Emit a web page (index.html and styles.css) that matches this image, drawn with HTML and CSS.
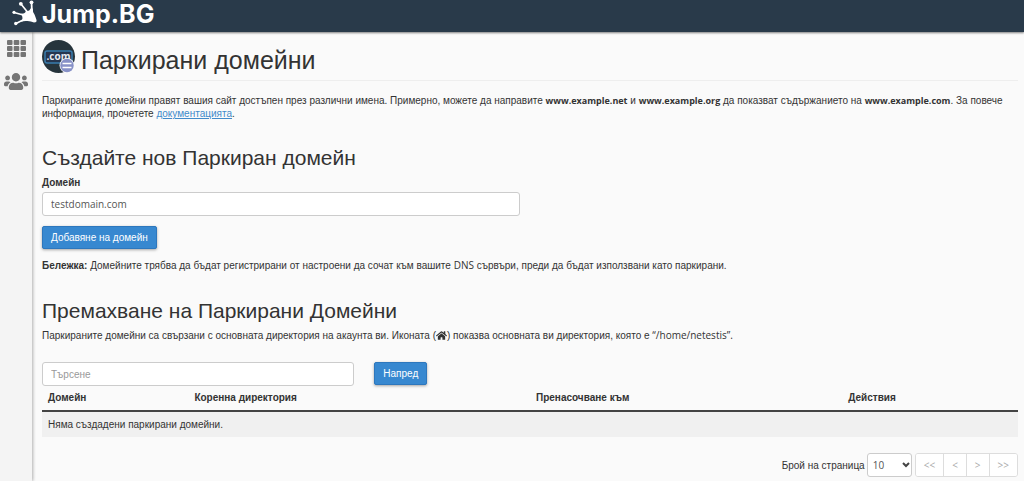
FILE: index.html
```html
<!DOCTYPE html>
<html lang="bg">
<head>
<meta charset="utf-8">
<meta name="viewport" content="width=device-width, initial-scale=1">
<title>Паркирани домейни</title>
<link rel="stylesheet" href="styles.css">
</head>
<body>
<header class="topbar">
  <a class="brand" href="#">
    <svg class="brand-mark" viewBox="0 0 25 26" aria-hidden="true">
      <g stroke="#fff" stroke-linecap="round" fill="none">
        <path d="M2 12.500L15 16" stroke-width="1.600"/>
        <path d="M9 4L17 14" stroke-width="1.600"/>
        <path d="M19.500 2L20 14" stroke-width="1.800"/>
        <path d="M4 23.500L15 18" stroke-width="1.600"/>
      </g>
      <g fill="#fff">
        <circle cx="2" cy="12.300" r="1.600"/>
        <circle cx="8.800" cy="3.800" r="1.900"/>
        <circle cx="19.500" cy="2.300" r="1.900"/>
        <circle cx="3.800" cy="23.500" r="1.700"/>
        <path d="M9 13.800Q13.500 14 14 10.500Q17.500 12 18.500 8.500L20.800 8.500Q20.500 12 22.500 14.500Q23.500 17 24.500 20Q25 22.500 22 22.500Q19 21 15.500 21Q12 20.500 9 22Q12 18.500 9 13.800Z"/>
      </g>
    </svg>
    <span>Jump.BG</span>
  </a>
</header>
<div class="shell">
  <nav class="sidebar" aria-label="Меню">
    <a href="#" aria-label="Инструменти">
      <svg class="icon-grid" viewBox="0 0 19 17" aria-hidden="true">
        <g fill="#757575">
          <rect width="5.500" height="5" rx="1"/><rect x="6.700" width="5.600" height="5" rx="1"/><rect x="13.500" width="5.500" height="5" rx="1"/>
          <rect y="6" width="5.500" height="5" rx="1"/><rect x="6.700" y="6" width="5.600" height="5" rx="1"/><rect x="13.500" y="6" width="5.500" height="5" rx="1"/>
          <rect y="12" width="5.500" height="5" rx="1"/><rect x="6.700" y="12" width="5.600" height="5" rx="1"/><rect x="13.500" y="12" width="5.500" height="5" rx="1"/>
        </g>
      </svg>
    </a>
    <a href="#" aria-label="Потребители">
      <svg class="icon-users" viewBox="0 0 640 448" aria-hidden="true">
        <path fill="#757575" d="M96 192c35 0 64-29 64-64s-29-64-64-64-64 29-64 64 29 64 64 64zm448 0c35 0 64-29 64-64s-29-64-64-64-64 29-64 64 29 64 64 64zm32 32h-64c-18 0-34 7-45 18 40 22 69 62 75 110h66c18 0 32-14 32-32v-32c0-35-29-64-64-64zm-256 0c62 0 112-50 112-112S382 0 320 0 208 50 208 112s50 112 112 112zm77 32h-8a155 155 0 0 1-138 0h-8c-64 0-115 52-115 115v29c0 27 21 48 48 48h288c27 0 48-21 48-48v-29c0-63-51-115-115-115zm-224-14c-11-11-27-18-45-18H64c-35 0-64 29-64 64v32c0 18 14 32 32 32h66c6-48 35-88 75-110z"/>
      </svg>
    </a>
  </nav>
  <main class="content">
    <h1 class="page-title">
      <svg class="page-icon" viewBox="0 0 34 34" aria-hidden="true">
        <circle cx="16.500" cy="16.500" r="16.500" fill="#26343c"/>
        <rect x="3" y="11" width="27" height="12" rx="2" fill="#26364f" stroke="#397cad" stroke-width="1.500"/>
        <text class="page-icon-text" x="16.500" y="20" text-anchor="middle">.com</text>
        <circle cx="25" cy="25.500" r="7.500" fill="#fafafa"/>
        <circle cx="25" cy="25.500" r="6.700" fill="#8791c7"/>
        <path d="M20.500 23.500h9M20.500 27.500h9" stroke="#fff" stroke-width="1.500"/>
      </svg>
      <span>Паркирани домейни</span>
    </h1>
    <p class="intro">Паркираните домейни правят вашия сайт достъпен през различни имена. Примерно, можете да направите <b class="host">www.example.net</b> и <b class="host">www.example.org</b> да показват съдържанието на <b class="host">www.example.com</b>. За повече информация, прочетете <a href="#">документацията</a>.</p>

    <section class="block">
      <h2>Създайте нов Паркиран домейн</h2>
      <form class="create">
        <label for="domain">Домейн</label>
        <input class="field latin" id="domain" type="text" value="testdomain.com">
        <button class="btn" type="button">Добавяне на домейн</button>
      </form>
      <p class="note"><b>Бележка:</b> Домейните трябва да бъдат регистрирани от настроени да сочат към вашите <span class="latin">DNS</span> сървъри, преди да бъдат използвани като паркирани.</p>
    </section>

    <section class="block">
      <h2>Премахване на Паркирани Домейни</h2>
      <p class="hint">Паркираните домейни са свързани с основната директория на акаунта ви. Иконата (<svg class="icon-home" viewBox="0 0 576 448" role="img" aria-label="Начало"><path fill="#333" d="M280 116L96 268v164a16 16 0 0 0 16 16h112a16 16 0 0 0 16-16v-96a16 16 0 0 1 16-16h64a16 16 0 0 1 16 16v96a16 16 0 0 0 16 16h112a16 16 0 0 0 16-16V268L296 116a12 12 0 0 0-16 0zm291 103l-83-69V12a12 12 0 0 0-12-12h-56a12 12 0 0 0-12 12v72L318 10a48 48 0 0 0-61 0L4 219a12 12 0 0 0-1 17l25 31a12 12 0 0 0 17 1L280 75a12 12 0 0 1 15 0l236 193a12 12 0 0 0 17-1l25-31a12 12 0 0 0-2-17z"/></svg>) показва основната ви директория, която е <span class="latin">“/home/netestis”.</span></p>
      <form class="search" role="search">
        <input class="field" type="search" placeholder="Търсене" aria-label="Търсене">
        <button class="btn" type="button">Напред</button>
      </form>
      <table class="domains">
        <thead>
          <tr><th class="col-domain">Домейн</th><th class="col-root">Коренна директория</th><th class="col-redirect">Пренасочване към</th><th>Действия</th></tr>
        </thead>
        <tbody>
          <tr><td colspan="4">Няма създадени паркирани домейни.</td></tr>
        </tbody>
      </table>
      <div class="pager">
        <label for="size">Брой на страница</label>
        <span class="select">
          <select class="latin" id="size"><option>10</option><option>20</option><option>50</option></select>
          <svg class="chevron" viewBox="0 0 8 6" aria-hidden="true"><path d="M1 1l3 3 3-3" fill="none" stroke="#444" stroke-width="2"/></svg>
        </span>
        <div class="pages latin">
          <button type="button" disabled>&lt;&lt;</button>
          <button type="button" disabled>&lt;</button>
          <button type="button" disabled>&gt;</button>
          <button type="button" disabled>&gt;&gt;</button>
        </div>
      </div>
    </section>
  </main>
</div>
</body>
</html>
```
FILE: styles.css
```css
* { box-sizing: border-box; }

body {
  margin: 0;
  min-height: 100vh;
  display: flex;
  flex-direction: column;
  background: #fafafa;
  color: #333;
  font: 10px/13px "Liberation Sans", Arial, sans-serif;
}

input, button, select { font: inherit; color: inherit; }
h1, h2, p { margin: 0; font-weight: 400; }

.latin { font-family: "Open Sans", sans-serif; line-height: 12px; }
.host { font: 700 9px/12px "Open Sans", sans-serif; }

.topbar {
  height: 32px;
  padding-left: 12px;
  background: #293a4a;
  box-shadow: 0 1px 2px rgba(0, 0, 0, .5);
  position: relative;
  z-index: 1;
}
.brand {
  display: flex;
  gap: 5px;
  color: #fff;
  font: 700 25px/28px Inter, sans-serif;
  text-decoration: none;
}
.brand-mark { width: 25px; height: 26px; }

.shell { display: flex; flex: 1; }

.sidebar {
  flex: none;
  width: 32px;
  padding-top: 8px;
  display: flex;
  flex-direction: column;
  align-items: center;
  gap: 16px;
  background: #f4f4f4;
  box-shadow: 1px 0 3px rgba(0, 0, 0, .3);
}
.sidebar a, .sidebar svg { display: block; }
.icon-grid { width: 19px; height: 17px; }
.icon-users { width: 24px; height: 17px; }

.content { flex: 1; min-width: 0; padding: 8px 6px 4px 10px; }

.page-title {
  display: flex;
  gap: 5px;
  padding-bottom: 6px;
  border-bottom: 1px solid #eee;
  font-size: 25px;
  line-height: 40px;
}
.page-title span { height: 34px; }
.page-icon { width: 34px; height: 34px; }
.page-icon-text { font: 700 10px "Open Sans", sans-serif; fill: #e4e9f0; }

.intro { margin-top: 13px; }
a { color: #428bca; }

.block { margin-top: 25px; }
.block + .block { margin-top: 26px; }
h2 { font-size: 21px; line-height: 26px; }

.create {
  display: flex;
  flex-direction: column;
  align-items: flex-start;
  margin-top: 5px;
}
.create label { margin-bottom: 3px; font-weight: 700; }
.create .field { width: 49%; margin-bottom: 10px; }

.field {
  height: 24px;
  padding: 0 8px;
  border: 1px solid #ccc;
  border-radius: 3px;
  background: #fff;
  color: #555;
}
.field::placeholder { color: #999; opacity: 1; }

.btn {
  height: 23px;
  padding: 0 8px;
  border: 1px solid #2d77bd;
  border-radius: 2px;
  background: #3788d0;
  color: #fff;
  box-shadow: 0 1px 3px rgba(0, 0, 0, .35);
}

.note { margin-top: 10px; }

.hint { margin-top: 5px; }
.icon-home { width: 11px; height: 9px; vertical-align: -1px; }

.search { display: flex; gap: 20px; margin-top: 20px; }
.search .field { width: 32%; }

.domains { width: 100%; border-collapse: collapse; }
.domains th, .domains td { padding: 6px; text-align: left; }
.domains th { padding-top: 5px; }
.domains thead { border-bottom: 2px solid #444; }
.domains tbody { background: #f0f0f0; }
.col-domain { width: 15%; }
.col-root { width: 35%; }
.col-redirect { width: 32%; }

.pager {
  display: flex;
  justify-content: flex-end;
  align-items: center;
  margin-top: 16px;
}
.select { position: relative; margin: 0 3px 0 2px; }
.select select {
  display: block;
  width: 45px;
  height: 24px;
  padding: 0 5px;
  appearance: none;
  border: 1px solid #ccc;
  border-radius: 3px;
  background: #fff;
  color: #555;
}
.chevron {
  position: absolute;
  top: 9px;
  right: 2px;
  width: 8px;
  height: 6px;
  pointer-events: none;
}
.pages {
  display: flex;
  border: 1px solid #ddd;
  border-radius: 3px;
  overflow: hidden;
}
.pages button {
  height: 22px;
  padding: 0 8px;
  border: 0;
  background: #fff;
  color: #aaa;
}
.pages button + button { border-left: 1px solid #ddd; }
```
